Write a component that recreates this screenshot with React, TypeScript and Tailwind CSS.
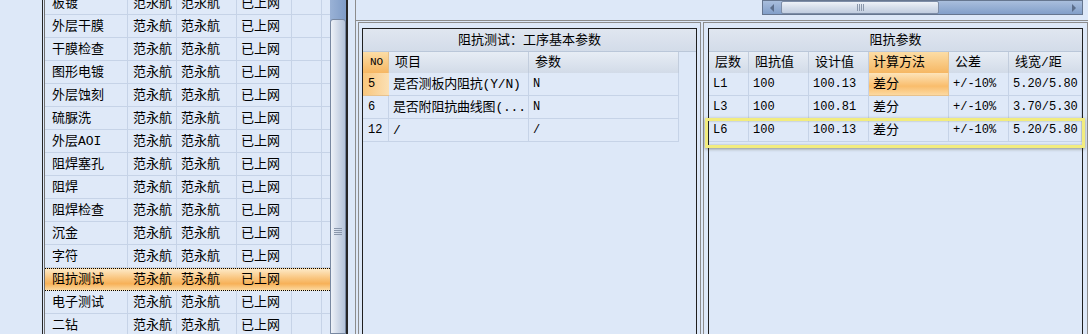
const steps = [
  '板镀',
  '外层干膜',
  '干膜检查',
  '图形电镀',
  '外层蚀刻',
  '硫脲洗',
  '外层AOI',
  '阻焊塞孔',
  '阻焊',
  '阻焊检查',
  '沉金',
  '字符',
  '阻抗测试',
  '电子测试',
  '二钻',
];

const processRows = [
  { no: '5', item: '是否测板内阻抗(Y/N)', value: 'N', current: true },
  { no: '6', item: '是否附阻抗曲线图(...', value: 'N', current: false },
  { no: '12', item: '/', value: '/', current: false },
];

const impedanceRows = [
  ['L1', '100', '100.13', '差分', '+/-10%', '5.20/5.80'],
  ['L3', '100', '100.81', '差分', '+/-10%', '3.70/5.30'],
  ['L6', '100', '100.13', '差分', '+/-10%', '5.20/5.80'],
];

const impedanceCols = [
  { title: '层数', w: 'w-[40px]' },
  { title: '阻抗值', w: 'w-[60px]' },
  { title: '设计值', w: 'w-[60px]' },
  { title: '计算方法', w: 'w-[80px]' },
  { title: '公差', w: 'w-[60px]' },
  { title: '线宽/距', w: 'w-[73px]' },
];

function StepList() {
  return (
    <div className="flex w-[306px] shrink-0 border-l border-r-2 border-[#262626] pl-px">
      <div className="flex flex-1 border-l border-[#6f6f6f]">
        {/* grid, first row scrolled half out of view */}
        <div className="-mt-[8px] w-[285px]">
          {steps.map((s) =>
            s === '阻抗测试' ? (
              <div
                key={s}
                className="flex h-[23px] items-center border-y border-dotted border-black bg-[linear-gradient(to_bottom,#fde9c6,#f9c47c_45%,#f7b158_70%,#fcd9a0)]"
              >
                <div className="w-[83px] pl-[7px]">{s}</div>
                <div className="w-[49px] pl-[5px]">范永航</div>
                <div className="w-[60px] pl-[4px]">范永航</div>
                <div className="w-[55px] pl-[4px]">已上网</div>
              </div>
            ) : (
              <div key={s} className="flex h-[23px] border-b border-[#c6d3e7] bg-[#dfe9f8]">
                <div className="flex w-[83px] items-center border-r border-[#c6d3e7] pl-[7px]">{s}</div>
                <div className="flex w-[49px] items-center border-r border-[#c6d3e7] pl-[5px]">范永航</div>
                <div className="flex w-[60px] items-center border-r border-[#c6d3e7] pl-[4px]">范永航</div>
                <div className="flex w-[55px] items-center border-r border-[#c6d3e7] pl-[4px]">已上网</div>
                <div className="w-[30px] border-r border-[#c6d3e7]" />
                <div className="w-[8px]" />
              </div>
            ),
          )}
        </div>
        {/* vertical scrollbar */}
        <div className="flex w-[16px] flex-col bg-[linear-gradient(to_right,#9ab2d6,#7f9cc7)]">
          <div className="h-[19px] shrink-0" />
          <div className="flex flex-1 flex-col items-center rounded-t-[3px] border border-[#7888a1] bg-[linear-gradient(to_right,#eef2f8,#d3dcea_45%,#b4c3d9)] pt-[208px]">
            <div className="flex w-[8px] flex-col gap-px">
              <div className="h-px bg-[#8a97ab]" />
              <div className="h-px bg-[#8a97ab]" />
              <div className="h-px bg-[#8a97ab]" />
              <div className="h-px bg-[#8a97ab]" />
            </div>
          </div>
        </div>
      </div>
    </div>
  );
}

function HScroll() {
  return (
    <div className="flex h-[15px] w-[321px] items-stretch border border-[#66768f] bg-[linear-gradient(to_bottom,#a9bedd,#829fc9)]">
      <div className="flex w-[18px] items-center justify-center">
        <div className="h-0 w-0 border-y-[4px] border-r-[4px] border-y-transparent border-r-[#5b6d8a]" />
      </div>
      <div className="flex w-[158px] items-center justify-center rounded-[2px] border border-[#7d8da7] bg-[linear-gradient(to_bottom,#eef2f8,#d5deea_50%,#c1cde0)]">
        <div className="flex h-[7px] gap-px">
          <div className="w-px bg-[#8a97ab]" />
          <div className="w-px bg-[#8a97ab]" />
          <div className="w-px bg-[#8a97ab]" />
          <div className="w-px bg-[#8a97ab]" />
        </div>
      </div>
      <div className="flex-1" />
      <div className="flex w-[16px] items-center justify-center">
        <div className="h-0 w-0 border-y-[4px] border-l-[4px] border-y-transparent border-l-[#5b6d8a]" />
      </div>
    </div>
  );
}

function ProcessParams() {
  return (
    <div className="h-[400px] border border-[#1f1f1f] bg-[#dde8f8]">
      <div className="flex h-[23px] items-center justify-center border-b border-[#bac7d9] bg-[linear-gradient(to_bottom,#e0e6f0,#d3dce9)]">
        阻抗测试：工序基本参数
      </div>
      <div className="flex h-[21px]">
        <div className="flex w-[26px] items-center border-r border-[#e6c089] bg-[linear-gradient(to_bottom,#fcdda6,#f6b763)] pl-[7px] text-[11px]">
          NO
        </div>
        <div className="flex w-[140px] items-center border-r border-[#c2cddd] bg-[linear-gradient(to_bottom,#e7edf5,#d2dbe8)] pl-[6px]">
          项目
        </div>
        <div className="flex w-[150px] items-center border-r border-[#c2cddd] bg-[linear-gradient(to_bottom,#e7edf5,#d2dbe8)] pl-[6px]">
          参数
        </div>
      </div>
      {processRows.map((r) => (
        <div key={r.no} className="flex h-[23px]">
          <div
            className={
              r.current
                ? 'flex w-[26px] items-center border-b border-[#e7c28e] bg-[linear-gradient(to_right,#f9c67c,#fbe0b4)] pl-[5px] text-[12px]'
                : 'flex w-[26px] items-center border-r border-b border-[#c6d3e7] bg-[#dfe9f8] pl-[5px] text-[12px]'
            }
          >
            {r.no}
          </div>
          <div className="flex w-[140px] items-center overflow-hidden border-r border-b border-[#c6d3e7] bg-[#dfe9f8] pl-[4px] tracking-[-0.2px]">
            {r.item}
          </div>
          <div className="flex w-[150px] items-center border-r border-b border-[#c6d3e7] bg-[#dfe9f8] pl-[4px] text-[12px]">
            {r.value}
          </div>
        </div>
      ))}
    </div>
  );
}

function ImpedanceParams() {
  return (
    <div className="h-[400px] border border-[#1f1f1f] bg-[#dde8f8]">
      <div className="flex h-[23px] items-center justify-center border-b border-[#bac7d9] bg-[linear-gradient(to_bottom,#e0e6f0,#d3dce9)]">
        阻抗参数
      </div>
      <div className="flex h-[21px]">
        {impedanceCols.map((c) => (
          <div
            key={c.title}
            className={
              c.title === '计算方法'
                ? `flex ${c.w} items-center border-r border-[#e6c089] bg-[linear-gradient(to_bottom,#fcdda6,#f6b763)] pl-[4px]`
                : `flex ${c.w} items-center border-r border-[#c2cddd] bg-[linear-gradient(to_bottom,#e7edf5,#d2dbe8)] pl-[6px]`
            }
          >
            {c.title}
          </div>
        ))}
      </div>
      <div className="relative">
        {impedanceRows.map((r, i) => (
          <div key={r[0]} className="flex h-[23px]">
            {r.map((v, j) => (
              <div
                key={j}
                className={
                  i === 0 && j === 3
                    ? `flex ${impedanceCols[j].w} items-center border-r border-b border-[#e7c28e] bg-[linear-gradient(to_bottom,#fde4ba,#f9bd6c_60%,#fcd9a2)] pl-[4px]`
                    : j === 3
                      ? `flex ${impedanceCols[j].w} items-center border-r border-b border-[#c6d3e7] bg-[#dfe9f8] pl-[4px]`
                      : `flex ${impedanceCols[j].w} items-center border-r border-b border-[#c6d3e7] bg-[#dfe9f8] pl-[4px] text-[12px]`
                }
              >
                {v}
              </div>
            ))}
          </div>
        ))}
        {/* focused row frame */}
        <div className="pointer-events-none absolute top-[45px] -right-[3px] -left-[4px] h-[30px] border-[3px] border-[#f2ec7e] shadow-[0_1px_3px_rgba(60,60,40,0.5),inset_0_0_2px_rgba(60,60,40,0.4)]" />
      </div>
    </div>
  );
}

export default function App() {
  return (
    <div className="flex h-[334px] w-[1088px] overflow-hidden bg-[#dde8f8] font-['Liberation_Mono','Noto_Sans_CJK_SC',monospace] text-[13px] leading-none whitespace-nowrap text-black">
      <div className="w-[42px] shrink-0" />
      <StepList />
      <div className="w-[7px] shrink-0" />
      <div className="flex w-[733px] shrink-0 flex-col border-l border-[#8c8c8c]">
        <div className="flex h-[21px] shrink-0 justify-end border-b border-[#8c8c8c] pr-[5px]">
          <HScroll />
        </div>
        <div className="flex flex-1 gap-[2px] pt-px pl-[2px]">
          <div className="w-[343px] shrink-0 border-x border-t border-[#8c8c8c] px-[3px] pt-[5px]">
            <ProcessParams />
          </div>
          <div className="w-[385px] shrink-0 border-x border-t border-[#8c8c8c] px-[4px] pt-[5px]">
            <ImpedanceParams />
          </div>
        </div>
      </div>
    </div>
  );
}
